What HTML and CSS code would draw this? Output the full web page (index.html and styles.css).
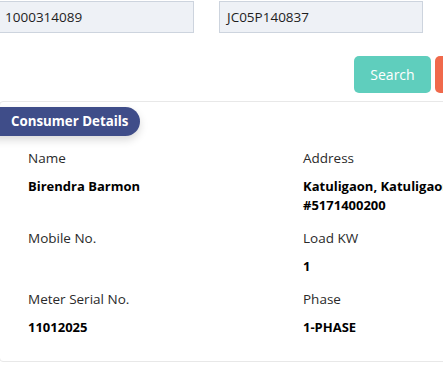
FILE: index.html
```html
<!DOCTYPE html>
<html>
<head>
<meta charset="utf-8">
<link rel="stylesheet" href="styles.css">
</head>
<body>
<div class="page">
  <div class="filters">
    <div class="field">1000314089</div>
    <div class="field">JC05P140837</div>
    <div class="field"></div>
  </div>
  <div class="actions">
    <button class="btn btn-search">Search</button>
    <button class="btn btn-reset">Reset</button>
  </div>
  <div class="card">
    <div class="pill">Consumer Details</div>
    <div class="details">
      <div class="item">
        <div class="label">Name</div>
        <div class="value">Birendra Barmon</div>
      </div>
      <div class="item">
        <div class="label">Address</div>
        <div class="value">Katuligaon, Katuligaon, Assam<br>#5171400200</div>
      </div>
      <div class="item">
        <div class="label">Mobile No.</div>
        <div class="value"></div>
      </div>
      <div class="item">
        <div class="label">Load KW</div>
        <div class="value">1</div>
      </div>
      <div class="item">
        <div class="label">Meter Serial No.</div>
        <div class="value">11012025</div>
      </div>
      <div class="item">
        <div class="label">Phase</div>
        <div class="value">1-PHASE</div>
      </div>
    </div>
  </div>
</div>
</body>
</html>
```

FILE: styles.css
```css
html, body {
  margin: 0;
  padding: 0;
  background: #fff;
  overflow: hidden;
}
body {
  font-family: "Open Sans", "Noto Sans", sans-serif;
  color: #222;
}
.page {
  width: 512px;
  margin-left: -3px;
}
.filters {
  display: flex;
  gap: 25px;
  padding-top: 1px;
}
.field {
  width: 195px;
  height: 30px;
  flex: none;
  background: #eef1f6;
  border: 1px solid #cdd4de;
  box-sizing: content-box;
  font-size: 13.5px;
  line-height: 30px;
  padding-left: 7px;
  color: #1e1e1e;
}
.field:first-child { width: 188px; }
.actions {
  display: flex;
  justify-content: flex-end;
  gap: 4px;
  margin-top: 23px;
}
.btn {
  border: none;
  height: 37px;
  border-radius: 5px;
  color: #fff;
  font-family: inherit;
  font-size: 14px;
  font-weight: 500;
  padding: 0;
}
.btn-search {
  width: 77px;
  background: #5fcebd;
}
.btn-reset {
  width: 74px;
  background: #f0694b;
}
.card {
  margin-top: 8px;
  margin-left: 2px;
  border: 1px solid #e8e8e8;
  border-radius: 4px;
  padding: 5px 0 24px;
}
.pill {
  display: inline-block;
  margin-left: -9px;
  height: 29px;
  line-height: 29px;
  padding: 0 12px 0 20px;
  background: #3f4d89;
  color: #fff;
  font-size: 13.3px;
  font-weight: 700;
  border-radius: 0 15px 15px 0;
  box-shadow: 0 4px 8px rgba(0, 0, 0, 0.15);
}
.details {
  display: grid;
  grid-template-columns: 275px 275px;
  padding-left: 28px;
  margin-top: 13px;
  row-gap: 14px;
}
.label {
  font-size: 13.5px;
  line-height: 19px;
  color: #2a2a2a;
}
.value {
  margin-top: 9px;
  font-size: 13px;
  line-height: 19px;
  font-weight: 700;
  color: #000;
  min-height: 19px;
  white-space: nowrap;
}
```
